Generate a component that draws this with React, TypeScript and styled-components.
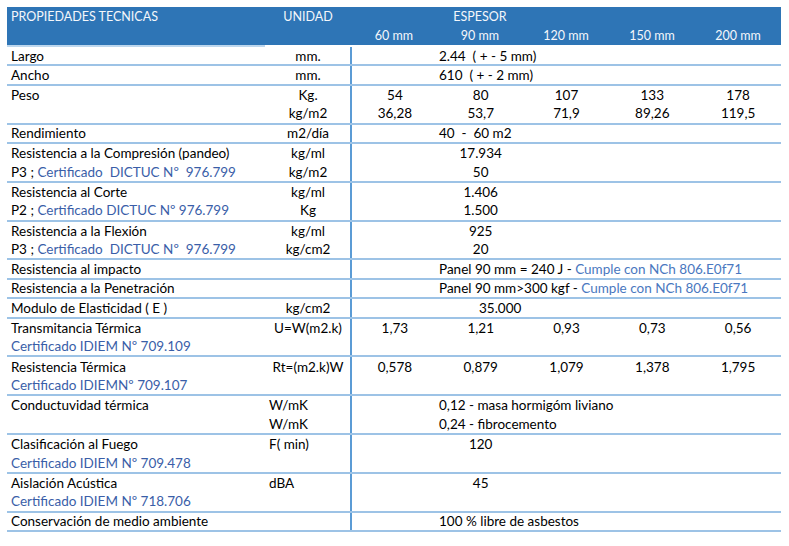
import React from "react";
import styled, { createGlobalStyle } from "styled-components";

type Align = "left" | "center" | "right";

type ValueLine =
  | { kind: "nums"; items: string[] }
  | { kind: "span"; text: React.ReactNode; pad: number }
  | { kind: "mid"; text: string }
  | { kind: "empty" };

interface IGroup {
  labels: React.ReactNode[];
  units: string[];
  unitAlign?: Align;
  values: ValueLine[];
}

const GlobalStyle = createGlobalStyle`
  body {
    margin: 0;
    background: #ffffff;
  }
`;

const Cert = styled.span`
  color: #3a5ea8;
`;

const Norm = styled.span`
  color: #4a78c0;
`;

const groups: IGroup[] = [
  {
    labels: ["Largo"],
    units: ["mm."],
    values: [{ kind: "span", text: "2.44  ( + - 5 mm)", pad: 87 }],
  },
  {
    labels: ["Ancho"],
    units: ["mm."],
    values: [{ kind: "span", text: "610  ( + - 2 mm)", pad: 87 }],
  },
  {
    labels: ["Peso", ""],
    units: ["Kg.", "kg/m2"],
    values: [
      { kind: "nums", items: ["54", "80", "107", "133", "178"] },
      { kind: "nums", items: ["36,28", "53,7", "71,9", "89,26", "119,5"] },
    ],
  },
  {
    labels: ["Rendimiento"],
    units: ["m2/día"],
    values: [{ kind: "span", text: "40  -  60 m2", pad: 87 }],
  },
  {
    labels: [
      "Resistencia a la Compresión (pandeo)",
      <>
        P3 ; <Cert>Certificado  DICTUC Nº  976.799</Cert>
      </>,
    ],
    units: ["kg/ml", "kg/m2"],
    values: [
      { kind: "mid", text: "17.934" },
      { kind: "mid", text: "50" },
    ],
  },
  {
    labels: [
      "Resistencia al Corte",
      <>
        P2 ; <Cert>Certificado DICTUC Nº 976.799</Cert>
      </>,
    ],
    units: ["kg/ml", "Kg"],
    values: [
      { kind: "mid", text: "1.406" },
      { kind: "mid", text: "1.500" },
    ],
  },
  {
    labels: [
      "Resistencia a la Flexión",
      <>
        P3 ; <Cert>Certificado  DICTUC Nº  976.799</Cert>
      </>,
    ],
    units: ["kg/ml", "kg/cm2"],
    values: [
      { kind: "mid", text: "925" },
      { kind: "mid", text: "20" },
    ],
  },
  {
    labels: ["Resistencia al impacto"],
    units: [""],
    values: [
      {
        kind: "span",
        text: (
          <>
            Panel 90 mm = 240 J - <Norm>Cumple con NCh 806.E0f71</Norm>
          </>
        ),
        pad: 87,
      },
    ],
  },
  {
    labels: ["Resistencia a la Penetración"],
    units: [""],
    values: [
      {
        kind: "span",
        text: (
          <>
            Panel 90 mm&gt;300 kgf - <Norm>Cumple con NCh 806.E0f71</Norm>
          </>
        ),
        pad: 87,
      },
    ],
  },
  {
    labels: ["Modulo de Elasticidad ( E )"],
    units: ["kg/cm2"],
    values: [{ kind: "span", text: "35.000", pad: 127 }],
  },
  {
    labels: ["Transmitancia Térmica", <Cert>Certificado IDIEM Nº 709.109</Cert>],
    units: ["U=W(m2.k)", ""],
    values: [
      { kind: "nums", items: ["1,73", "1,21", "0,93", "0,73", "0,56"] },
      { kind: "empty" },
    ],
  },
  {
    labels: ["Resistencia Térmica", <Cert>Certificado IDIEMNº 709.107</Cert>],
    units: ["Rt=(m2.k)W", ""],
    values: [
      { kind: "nums", items: ["0,578", "0,879", "1,079", "1,378", "1,795"] },
      { kind: "empty" },
    ],
  },
  {
    labels: ["Conductuvidad térmica", ""],
    units: ["W/mK", "W/mK"],
    unitAlign: "left",
    values: [
      { kind: "span", text: "0,12 - masa hormigóm liviano", pad: 87 },
      { kind: "span", text: "0,24 - fibrocemento", pad: 87 },
    ],
  },
  {
    labels: ["Clasificación al Fuego", <Cert>Certificado IDIEM Nº 709.478</Cert>],
    units: ["F( min)", ""],
    unitAlign: "left",
    values: [{ kind: "mid", text: "120" }, { kind: "empty" }],
  },
  {
    labels: ["Aislación Acústica", <Cert>Certificado IDIEM Nº 718.706</Cert>],
    units: ["dBA", ""],
    unitAlign: "left",
    values: [{ kind: "mid", text: "45" }, { kind: "empty" }],
  },
  {
    labels: ["Conservación de medio ambiente"],
    units: [""],
    values: [{ kind: "span", text: "100 % libre de asbestos", pad: 87 }],
  },
];

const thickness = ["60 mm", "90 mm", "120 mm", "150 mm", "200 mm"];

const renderValues = (line: ValueLine, i: number) => {
  switch (line.kind) {
    case "nums":
      return line.items.map((v, k) => (
        <Cell key={`${i}-${k}`} $align="center" $row={i + 1}>
          {v}
        </Cell>
      ));
    case "span":
      return (
        <SpanCell key={i} $row={i + 1} $pad={line.pad}>
          {line.text}
        </SpanCell>
      );
    case "mid":
      return (
        <MidCell key={i} $row={i + 1}>
          {line.text}
        </MidCell>
      );
    default:
      return null;
  }
};

const App: React.FC = () => {
  return (
    <>
      <GlobalStyle />
      <Table>
        <Header>
          <HeadCell $col="1" $row={1} $align="left">
            PROPIEDADES TECNICAS
          </HeadCell>
          <HeadCell $col="2" $row={1} $align="center">
            UNIDAD
          </HeadCell>
          <HeadCell $col="4" $row={1} $align="center">
            ESPESOR
          </HeadCell>
          {thickness.map((t, i) => (
            <HeadCell key={t} $col={String(i + 3)} $row={2} $align="center">
              {t}
            </HeadCell>
          ))}
        </Header>
        <HeaderRule />

        {groups.map((g, gi) => {
          const n = g.labels.length;
          return (
            <Group key={gi} $rows={n}>
              <LabelCol $rows={n}>
                {g.labels.map((l, i) => (
                  <Cell key={i} $align="left" $row={i + 1}>
                    {l}
                  </Cell>
                ))}
              </LabelCol>
              <UnitCol $rows={n}>
                {g.units.map((u, i) => (
                  <Cell key={i} $align={g.unitAlign || "center"} $row={i + 1}>
                    {u}
                  </Cell>
                ))}
              </UnitCol>
              <ValueCol $rows={n}>{g.values.map(renderValues)}</ValueCol>
            </Group>
          );
        })}
      </Table>
    </>
  );
};

export default App;

const Table = styled.div`
  margin: 7px 0 0 7px;
  width: 774px;
  font-family: Lato, "Open Sans", "Liberation Sans", sans-serif;
  font-size: 13.5px;
  color: #000000;
`;

const Header = styled.div`
  display: grid;
  grid-template-columns: 258px 86px repeat(5, 86px);
  grid-template-rows: 19px 19px;
  background-color: #2e75b6;
  color: #f4f7fb;
  font-size: 12.5px;
`;

const HeadCell = styled.div<{ $col: string; $row: number; $align: Align }>`
  grid-column: ${(p) => p.$col};
  grid-row: ${(p) => p.$row};
  display: flex;
  align-items: center;
  justify-content: ${(p) =>
    p.$align === "left" ? "flex-start" : p.$align === "right" ? "flex-end" : "center"};
  padding-left: ${(p) => (p.$align === "left" ? "4px" : "0")};
  white-space: pre;
`;

const HeaderRule = styled.div`
  width: 258px;
  height: 2px;
  background-color: #bdd7ee;
`;

const Group = styled.div<{ $rows: number }>`
  display: grid;
  grid-template-columns: 258px 86px 430px;
  height: ${(p) => p.$rows * 19.4}px;
  box-sizing: border-box;
  border-bottom: 2px solid #9dc3e6;
`;

const LabelCol = styled.div<{ $rows: number }>`
  display: grid;
  grid-template-rows: repeat(${(p) => p.$rows}, 1fr);
`;

const UnitCol = styled.div<{ $rows: number }>`
  display: grid;
  grid-template-rows: repeat(${(p) => p.$rows}, 1fr);
`;

const ValueCol = styled.div<{ $rows: number }>`
  display: grid;
  grid-template-rows: repeat(${(p) => p.$rows}, 1fr);
  grid-template-columns: repeat(5, 1fr);
  border-left: 2px solid #5b9bd5;
  margin-left: -1px;
`;

const Cell = styled.div<{ $align: Align; $row: number }>`
  grid-row: ${(p) => p.$row};
  display: flex;
  align-items: center;
  justify-content: ${(p) =>
    p.$align === "left" ? "flex-start" : p.$align === "right" ? "flex-end" : "center"};
  padding-left: ${(p) => (p.$align === "left" ? "4px" : "0")};
  white-space: pre;
  min-width: 0;
`;

const SpanCell = styled.div<{ $row: number; $pad: number }>`
  grid-row: ${(p) => p.$row};
  grid-column: 1 / -1;
  display: flex;
  align-items: center;
  padding-left: ${(p) => p.$pad}px;
  white-space: pre;
`;

const MidCell = styled.div<{ $row: number }>`
  grid-row: ${(p) => p.$row};
  grid-column: 2;
  display: flex;
  align-items: center;
  justify-content: center;
  white-space: pre;
`;
